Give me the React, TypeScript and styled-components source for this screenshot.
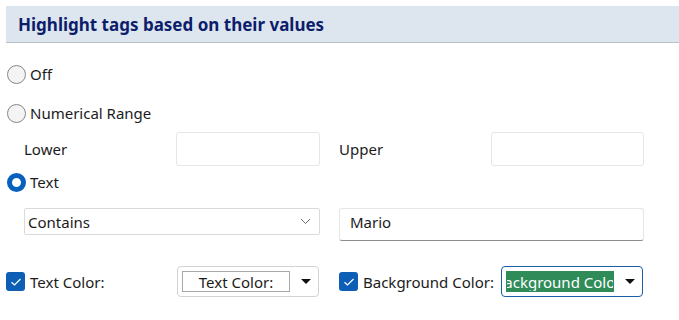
import React from "react";
import styled, { createGlobalStyle } from "styled-components";

const GlobalStyle = createGlobalStyle`
  body {
    margin: 0;
    background: #ffffff;
    font-family: "Noto Sans", "Open Sans", sans-serif;
    color: #1b1b1b;
  }
`;

const Page = styled.div`
  width: 679px;
  height: 320px;
  padding: 6px 0 0 6px;
  box-sizing: border-box;
  overflow: hidden;
`;

const Header = styled.div`
  height: 37px;
  background: #dde6ee;
  border-bottom: 1px solid #b9c1c9;
  box-sizing: border-box;
  display: flex;
  align-items: center;
  padding-left: 12px;
  font-size: 17px;
  font-weight: 700;
  color: #0c1d6b;
`;

const Body = styled.div`
  display: grid;
  grid-template-columns: 314px 305px;
  column-gap: 19px;
  padding-top: 21px;
`;

const Row = styled.div<{ $h: number; $gap?: number }>`
  grid-column: 1 / -1;
  height: ${(p) => p.$h}px;
  margin-bottom: ${(p) => p.$gap ?? 0}px;
  display: flex;
  align-items: center;
`;

const Cell = styled.div<{ $indent?: number; $h: number; $gap?: number }>`
  height: ${(p) => p.$h}px;
  margin-bottom: ${(p) => p.$gap ?? 0}px;
  padding-left: ${(p) => p.$indent ?? 0}px;
  display: flex;
  align-items: center;
  font-size: 15px;
`;

const RadioLabel = styled.label`
  display: flex;
  align-items: center;
  gap: 4px;
  font-size: 15px;
  margin-left: 1px;
`;

const RadioDot = styled.span<{ $on?: boolean }>`
  width: 19px;
  height: 19px;
  border-radius: 50%;
  box-sizing: border-box;
  flex: none;
  background: ${(p) => (p.$on ? "#ffffff" : "#f4f4f4")};
  border: ${(p) => (p.$on ? "5.5px solid #0860bd" : "1px solid #868686")};
`;

const TextBox = styled.div<{ $w?: number; $strong?: boolean; $h: number }>`
  width: ${(p) => (p.$w ? `${p.$w}px` : "100%")};
  height: ${(p) => p.$h}px;
  margin-left: auto;
  box-sizing: border-box;
  background: #fff;
  border: 1px solid #e6e6e6;
  border-bottom-color: ${(p) => (p.$strong ? "#8c8c8c" : "#e6e6e6")};
  border-radius: 3px;
  display: flex;
  align-items: center;
  padding: 0 0 5px 10px;
  font-size: 15px;
`;

const Select = styled.div`
  flex: 1;
  align-self: flex-start;
  height: 27px;
  box-sizing: border-box;
  border: 1px solid #dadada;
  border-radius: 2px;
  display: flex;
  align-items: center;
  justify-content: space-between;
  padding: 0 8px 0 3px;
  font-size: 15px;
`;

const Check = styled.span`
  width: 19px;
  height: 19px;
  border-radius: 3px;
  background: #0d5fb6;
  flex: none;
  display: flex;
  align-items: center;
  justify-content: center;
`;

const CheckLabel = styled.div`
  display: flex;
  align-items: center;
  gap: 5px;
  font-size: 15px;
`;

const ColorButton = styled.div<{ $focus?: boolean }>`
  width: 142px;
  height: 31px;
  margin-left: auto;
  margin-right: 1px;
  box-sizing: border-box;
  border: 1px solid ${(p) => (p.$focus ? "#1b5ea6" : "#d3d3d3")};
  border-radius: 4px;
  display: flex;
  align-items: center;
  padding-left: 4px;
  gap: 11px;
`;

const Swatch = styled.div<{ $bg: string; $fg: string; $edge: string }>`
  width: 108px;
  height: 21px;
  box-sizing: border-box;
  background: ${(p) => p.$bg};
  color: ${(p) => p.$fg};
  border: 1px solid ${(p) => p.$edge};
  display: flex;
  justify-content: center;
  align-items: center;
  white-space: nowrap;
  overflow: hidden;
  font-size: 15px;
`;

const Caret = styled.span`
  width: 0;
  height: 0;
  border-left: 5px solid transparent;
  border-right: 5px solid transparent;
  border-top: 5px solid #111;
`;

const Tick = () => (
  <svg width="12" height="10" viewBox="0 0 12 10">
    <path d="M1.5 5.2 L4.5 8 L10.5 2" fill="none" stroke="#fff" strokeWidth="1.2" />
  </svg>
);

const Chevron = () => (
  <svg width="11" height="7" viewBox="0 0 11 7">
    <path d="M1 1 L5.5 5.5 L10 1" fill="none" stroke="#707070" strokeWidth="1" />
  </svg>
);

export default function App() {
  return (
    <Page>
      <GlobalStyle />
      <Header>Highlight tags based on their values</Header>
      <Body>
        <Row $h={20} $gap={19}>
          <RadioLabel>
            <RadioDot /> Off
          </RadioLabel>
        </Row>
        <Row $h={20} $gap={9}>
          <RadioLabel>
            <RadioDot /> Numerical Range
          </RadioLabel>
        </Row>

        <Cell $indent={18} $h={33} $gap={7}>
          Lower
          <TextBox $w={144} $h={34} />
        </Cell>
        <Cell $h={33} $gap={7}>
          Upper
          <TextBox $w={153} $h={34} />
        </Cell>

        <Row $h={20} $gap={16}>
          <RadioLabel>
            <RadioDot $on /> Text
          </RadioLabel>
        </Row>

        <Cell $indent={18} $h={32} $gap={26}>
          <Select>
            Contains
            <Chevron />
          </Select>
        </Cell>
        <Cell $h={32} $gap={26}>
          <TextBox $h={33} $strong>
            Mario
          </TextBox>
        </Cell>

        <Cell $h={31}>
          <CheckLabel>
            <Check>
              <Tick />
            </Check>
            Text Color:
          </CheckLabel>
          <ColorButton>
            <Swatch $bg="#ffffff" $fg="#1b1b1b" $edge="#a8a8a8">
              Text Color:
            </Swatch>
            <Caret />
          </ColorButton>
        </Cell>
        <Cell $h={31}>
          <CheckLabel>
            <Check>
              <Tick />
            </Check>
            Background Color:
          </CheckLabel>
          <ColorButton $focus>
            <Swatch $bg="#2f8c59" $fg="#ffffff" $edge="#2f8c59">
              Background Color:
            </Swatch>
            <Caret />
          </ColorButton>
        </Cell>
      </Body>
    </Page>
  );
}
